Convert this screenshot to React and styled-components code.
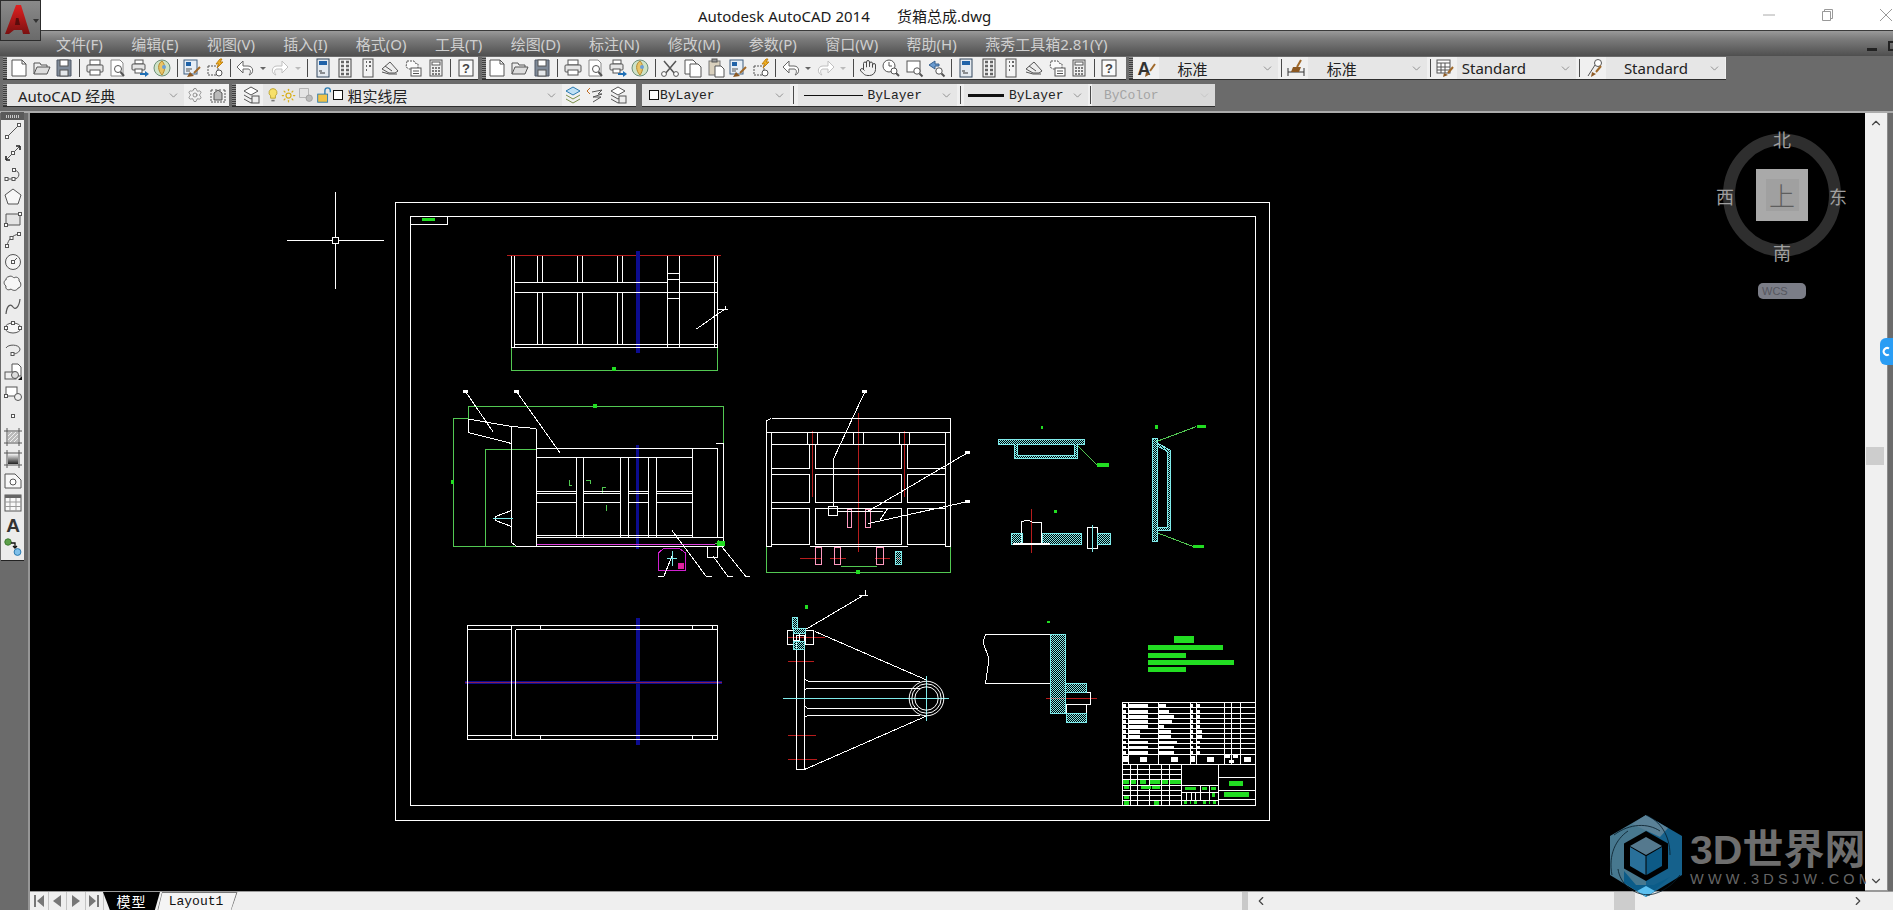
import styled, { createGlobalStyle } from 'styled-components';
import { ChevronDown, ChevronUp, ChevronLeft, ChevronRight, Settings, Hand, Sun } from 'lucide-react';

const GlobalStyle = createGlobalStyle`
	html, body { margin: 0; padding: 0; background: #6b6b6b; overflow: hidden; }
	* { box-sizing: border-box; }
`;

const CJK = '"Noto Sans", "Noto Sans CJK SC", sans-serif';
const MONO = '"Liberation Mono", "Noto Sans CJK SC", monospace';

const Page = styled.div`
	position: relative;
	width: 1893px;
	height: 910px;
	overflow: hidden;
	background: #6b6b6b;
	font-family: ${CJK};
	display: flex;
	flex-direction: column;
`;
const HiddenDefs = styled.svg`
	position: absolute;
	width: 0;
	height: 0;
`;

/* ---------- title + menu ---------- */
const TitleBar = styled.div`
	height: 30px;
	background: #fff;
	display: flex;
	align-items: center;
	padding-left: 698px;
	font-size: 15px;
	color: #1a1a1a;
	white-space: pre;
	flex: none;
`;
const WinButtons = styled.div`
	margin-left: auto;
	margin-right: -22px;
	display: flex;
	align-items: center;
`;
const WinButton = styled.div`
	width: 58px;
	height: 30px;
	display: flex;
	align-items: center;
	justify-content: center;
`;
const AppButton = styled.div`
	position: absolute;
	left: 0;
	top: 0;
	width: 41px;
	height: 41px;
	background: linear-gradient(#8a8a8a, #6a6a6a);
	border: 1px solid #2c2c2c;
	z-index: 3;
`;
const MenuBar = styled.div`
	height: 26px;
	flex: none;
	background: linear-gradient(#9a9a9a, #7d7d7d 30%, #4f4f4f);
	border-top: 1px solid #3a3a3a;
	display: flex;
	align-items: center;
	padding-left: 56px;
	gap: 28.4px;
	position: relative;
`;
const MenuItem = styled.span`
	font-size: 15px;
	color: #cfcfcf;
`;
const DocControls = styled.div`
	position: absolute;
	left: 1867px;
	top: 10px;
	display: flex;
	gap: 11px;
	align-items: flex-end;
`;
const DocMin = styled.div`
	width: 10px;
	height: 3px;
	background: #222;
`;
const DocMax = styled.div`
	width: 10px;
	height: 10px;
	border: 2px solid #222;
`;

/* ---------- toolbars ---------- */
const ToolRow = styled.div`
	height: ${(p) => p.$h}px;
	flex: none;
	display: flex;
	padding: ${(p) => p.$top}px 0 0 3px;
	gap: ${(p) => p.$gap}px;
`;
const Toolbar = styled.div`
	width: ${(p) => p.$w}px;
	margin-left: ${(p) => p.$ml || 0}px;
	height: 22px;
	display: flex;
	align-items: center;
	background: #f0f0f0;
	box-shadow: 0 1px 0 #2e2e2e;
`;
const Grip = styled.div`
	width: 4px;
	height: 100%;
	flex: none;
	margin-right: ${(p) => p.$after || 0}px;
	background: repeating-linear-gradient(#8a8a8a 0 1px, #3e3e3e 1px 2px);
`;
const ToolButton = styled.div`
	width: 22.6px;
	height: 22px;
	flex: none;
	display: flex;
	align-items: center;
	justify-content: center;
`;
const DropArrow = styled.div`
	width: 12.4px;
	flex: none;
	display: flex;
	justify-content: center;
	&::after {
		content: '';
		border-left: 3px solid transparent;
		border-right: 3px solid transparent;
		border-top: 3px solid ${(p) => (p.$off ? '#bbb' : '#666')};
	}
`;
const Sep = styled.div`
	width: 1px;
	height: 18px;
	flex: none;
	margin: 0 ${(p) => p.$m ?? 3.25}px;
	background: #4a4a4a;
`;
const Combo = styled.div`
	width: ${(p) => p.$w}px;
	height: 22px;
	flex: none;
	background: ${(p) => (p.$off ? '#d9d9d9' : '#e6e6e6')};
	display: flex;
	align-items: center;
	padding-left: ${(p) => p.$pad || 0}px;
	font-family: ${(p) => (p.$mono ? MONO : CJK)};
	font-size: ${(p) => (p.$mono ? 13 : 15)}px;
	color: ${(p) => (p.$off ? '#a4a4a4' : '#222')};
	white-space: pre;
`;
const ComboChevron = styled(ChevronDown)`
	margin-left: auto;
	margin-right: 4px;
	flex: none;
	color: ${(p) => (p.$off ? '#bbb' : '#666')};
`;
const LayerSquare = styled.span`
	width: 10px;
	height: 10px;
	border: 1px solid #111;
	background: #fff;
	flex: none;
	margin-right: ${(p) => p.$gap}px;
`;
const LineSample = styled.span`
	width: ${(p) => p.$w}px;
	height: ${(p) => p.$t}px;
	background: #111;
	flex: none;
	margin-right: 5px;
`;
const LayerIcon = styled.span`
	width: ${(p) => p.$w}px;
	flex: none;
	display: flex;
	justify-content: center;
`;
const ToolFiller = styled.div`
	height: 5px;
	flex: none;
`;
const ToolEdge = styled.div`
	height: 2px;
	flex: none;
	background: #ababab;
`;

/* ---------- body ---------- */
const Body = styled.div`
	flex: 1;
	min-height: 0;
	display: flex;
`;
const LeftColumn = styled.div`
	width: 30px;
	flex: none;
	padding-left: 1px;
	border-right: 2px solid #969696;
`;
const SideBar = styled.div`
	width: 23px;
	height: 448px;
	margin-top: -1px;
	background: #ececec;
	box-shadow: 0 1px 0 #222;
`;
const SideGrip = styled.div`
	height: 8px;
	background: #5a5a5a;
	display: flex;
	align-items: center;
	justify-content: center;
	&::after {
		content: '';
		width: 13px;
		height: 3px;
		background: repeating-linear-gradient(90deg, #c8c8c8 0 1px, #5a5a5a 1px 2px);
	}
`;
const SideButton = styled.div`
	height: 21.9px;
	display: flex;
	align-items: center;
	justify-content: center;
`;
const Center = styled.div`
	flex: 1;
	min-width: 0;
	display: flex;
	flex-direction: column;
`;
const Viewport = styled.div`
	height: 778px;
	flex: none;
	display: flex;
`;
const Canvas = styled.div`
	flex: 1;
	position: relative;
	background: #000;
	overflow: hidden;
`;
const DrawingSvg = styled.svg`
	display: block;
	width: 100%;
	height: 100%;
`;
const VScroll = styled.div`
	width: 23px;
	flex: none;
	background: #f0f0f0;
	border-right: 1px solid #8c8c8c;
	border-bottom: 1px solid #999;
	display: flex;
	flex-direction: column;
	align-items: center;
	justify-content: space-between;
	padding: 3px 0 2px;
	position: relative;
	color: #444;
`;
const VThumb = styled.div`
	position: absolute;
	left: 1px;
	top: 334px;
	width: 18px;
	height: 18px;
	background: #cdcdcd;
`;
const Strip = styled.div`
	width: 5px;
	flex: none;
	background: #6b6b6b;
`;
const BottomBar = styled.div`
	flex: 1;
	display: flex;
	background: #efefef;
	border-top: 1px solid #9a9a9a;
	align-items: stretch;
	color: #444;
`;
const NavButton = styled.div`
	width: 18.5px;
	flex: none;
	display: flex;
	align-items: center;
	justify-content: center;
	border-right: 1px solid #c4c4c4;
`;
const ModelTab = styled.div`
	width: 57px;
	margin-left: -1px;
	flex: none;
	background: #000;
	color: #fff;
	font-family: "Noto Sans CJK SC", sans-serif;
	font-size: 14px;
	line-height: 18px;
	letter-spacing: 1px;
	display: flex;
	align-items: center;
	justify-content: center;
	clip-path: polygon(0 0, 100% 0, 91% 100%, 12% 100%);
`;
const LayoutTab = styled.div`
	position: relative;
	width: 84px;
	margin-left: -6px;
	flex: none;
	background: #f4f4f4;
	font-family: ${MONO};
	font-size: 13px;
	color: #111;
	display: flex;
	align-items: center;
	justify-content: center;
	clip-path: polygon(9.5% 0, 100% 0, 92% 100%, 4% 100%);
`;
const TabOutline = styled.svg`
	position: absolute;
	left: 0;
	top: 0;
`;
const HScroll = styled.div`
	margin-left: auto;
	width: 651px;
	flex: none;
	display: flex;
	align-items: center;
	position: relative;
`;
const HGrip = styled.div`
	width: 6px;
	height: 100%;
	flex: none;
	background: #c9c9c9;
`;
const HThumb = styled.div`
	position: absolute;
	left: 372px;
	top: 0;
	width: 21px;
	height: 100%;
	background: #cdcdcd;
`;
const HArrow = styled.div`
	margin-left: ${(p) => p.$left}px;
	display: flex;
`;

/* ---------- over the canvas ---------- */
const CubeWrap = styled.div`
	position: absolute;
	left: 1665px;
	top: 9px;
	width: 150px;
	height: 190px;
`;
const CubeRing = styled.svg`
	position: absolute;
	left: 0;
	top: 0;
`;
const CubeLabel = styled.span`
	position: absolute;
	left: ${(p) => p.$x}px;
	top: ${(p) => p.$y}px;
	transform: translate(-50%, -50%);
	font-family: "Noto Sans CJK SC", sans-serif;
	font-size: 18px;
	line-height: 1;
	color: #a0a0a0;
`;
const CubeFace = styled.div`
	position: absolute;
	left: 61px;
	top: 47px;
	width: 52px;
	height: 52px;
	background: #a9a9a9;
	display: flex;
	align-items: center;
	justify-content: center;
`;
const CubeInner = styled.div`
	width: 33px;
	height: 32px;
	background: #a0a0a0;
	font-family: "Noto Sans CJK SC", sans-serif;
	font-weight: 300;
	font-size: 26px;
	line-height: 32px;
	text-align: center;
	color: #5e5e5e;
`;
const WcsPill = styled.div`
	position: absolute;
	left: 63px;
	top: 161px;
	width: 48px;
	height: 16px;
	border-radius: 5px;
	background: #7b7d87;
	color: #55565e;
	font-family: "Liberation Sans", sans-serif;
	font-size: 11px;
	line-height: 16px;
	padding-left: 4px;
`;
const SideWidget = styled.div`
	position: absolute;
	right: 0;
	top: 338px;
	width: 13px;
	height: 27px;
	border-radius: 6px 0 0 6px;
	background: #2a9df4;
	z-index: 3;
	display: flex;
	align-items: center;
	justify-content: center;
`;
const Watermark = styled.div`
	position: absolute;
	left: 1610px;
	top: 815px;
	width: 256px;
	height: 84px;
	overflow: hidden;
	z-index: 2;
	display: flex;
`;
const MarkLogo = styled.svg`
	flex: none;
`;
const MarkText = styled.div`
	margin: 13px 0 0 8px;
	white-space: nowrap;
`;
const MarkTitle = styled.div`
	font-family: "Liberation Sans", "Noto Sans CJK SC", sans-serif;
	font-weight: 700;
	font-size: 41px;
	line-height: 44px;
	color: #6e6e6e;
`;
const MarkUrl = styled.div`
	font-family: "Liberation Sans", sans-serif;
	font-size: 14.5px;
	line-height: 15px;
	letter-spacing: 4.2px;
	color: #666;
`;

/* ---------- icons ---------- */
const ICONS = {
	new: <><path d="M3 2h10l4 4v12H3z" fill="#fff" /><path d="M13 2v4h4" /></>,
	open: <><path d="M2 16V5h6l1 2h6v2" fill="#eee" /><path d="M2 16l3-7h13l-3 7z" fill="#ddd" /></>,
	save: <><path d="M3 2h14v16H3z" fill="#7f8a98" stroke="#4e5764" /><rect x="6" y="2" width="8" height="6" fill="#fff" /><rect x="6" y="12" width="8" height="6" fill="#e4e7ea" /></>,
	plot: <><rect x="5" y="2" width="10" height="5" fill="#fff" /><rect x="2" y="7" width="16" height="7" rx="1" fill="#e6e6e6" /><rect x="5" y="12" width="10" height="5" fill="#fff" /></>,
	preview: <><path d="M4 2h9l3 3v13H4z" fill="#fff" stroke="#888" /><circle cx="11" cy="11" r="3.5" /><path d="M13.5 14l3.5 4" strokeWidth="2" /></>,
	publish: <><rect x="5" y="2" width="8" height="4" fill="#fff" /><rect x="2" y="6" width="13" height="6" rx="1" fill="#e6e6e6" /><rect x="5" y="11" width="7" height="4" fill="#fff" /><path d="M10 16h6" stroke="#1f6fb5" strokeWidth="2" /><path d="M15 13l4 3-4 3z" fill="#1f6fb5" stroke="none" /></>,
	globe: <><circle cx="10" cy="10" r="8" fill="#cfe3c6" stroke="#6f8f7a" /><path d="M10 3c-5 3-4 10 0 14 3-4 4-10 0-14z" fill="#e9c466" stroke="#b58a30" /><circle cx="12" cy="9" r="2" fill="#6aa0d8" stroke="none" /></>,
	match: <><rect x="2" y="2" width="13" height="14" fill="#e6eef6" stroke="#3f5f80" /><rect x="4" y="4" width="5" height="4" fill="#1f62a8" stroke="none" /><path d="M4 11h6M4 13h4" /><path d="M18 9l-6 6" stroke="#a0692a" strokeWidth="2" /><path d="M8 14l4 4-7 1z" fill="#8d5a24" stroke="none" /></>,
	block: <><path d="M3 8h10v9H3z" strokeDasharray="2 1" /><circle cx="14" cy="15" r="3" fill="#fff" /><path d="M15 1l-4 5h3l-2 4 6-6h-3l2-3z" fill="#f0b020" stroke="#c08010" /></>,
	undo: <path d="M8 3L2 9l6 6v-4h5c3 0 3 4 1 6 5-1 5-9-1-9H8z" fill="#fff" stroke="#666" />,
	redo: <path d="M12 3l6 6-6 6v-4H7c-3 0-3 4-1 6-5-1-5-9 1-9h5z" fill="#fff" stroke="#c0c0c0" />,
	props: <><rect x="4" y="1" width="12" height="18" fill="#e4eaf0" stroke="#33475c" /><rect x="6" y="3" width="8" height="4" fill="#1f62a8" stroke="none" /><path d="M6 13h3M7 15h5" stroke="#333" /></>,
	center: <><rect x="4" y="1" width="12" height="18" fill="#f4f4f4" stroke="#444" /><path d="M6 4h3M11 4h3M6 8h3M11 8h3M6 12h3M11 12h3M6 16h3M11 16h3" strokeWidth="2.5" stroke="#666" /></>,
	palette: <><rect x="5" y="1" width="10" height="18" fill="#f4f4f4" stroke="#555" /><path d="M8 4h1M8 8h1M8 12h1M11 4h2M11 8h2" strokeWidth="2" stroke="#666" /></>,
	sheet: <><path d="M2 11l8-7 8 9-3 2H9z" fill="#eee" /><path d="M2 14l7 2h8M5 8l7 5" /></>,
	markup: <><path d="M4 3h7l1 2 3 1v4l-2 1H6L3 9z" fill="#fafafa" strokeDasharray="2 1" /><rect x="8" y="10" width="10" height="8" fill="#fff" /><path d="M10 13h6M10 15.5h6" /></>,
	calc: <><rect x="4" y="2" width="12" height="16" fill="#f0f0f0" stroke="#555" /><rect x="6" y="4" width="8" height="3" fill="#fff" /><path d="M6 10h8M6 13h8M6 16h8" strokeDasharray="2 1" strokeWidth="1.5" /></>,
	help: <><rect x="3" y="2" width="14" height="16" fill="#fafafa" stroke="#444" /><text x="10" y="15" textAnchor="middle" fontFamily="Liberation Sans" fontWeight="700" fontSize="13" fill="#444" stroke="none">?</text></>,
	cut: <><path d="M4 3l11 13M16 3L5 16" strokeWidth="1.5" /><circle cx="4" cy="16" r="2.4" fill="#fff" /><circle cx="16" cy="16" r="2.4" fill="#fff" /></>,
	copy: <><path d="M2 2h8l3 3v11H2z" fill="#fff" /><path d="M7 6h8l3 3v10H7z" fill="#fff" /></>,
	paste: <><rect x="3" y="3" width="11" height="14" fill="#d9d0bd" stroke="#777" /><rect x="6" y="1" width="5" height="3" fill="#999" /><path d="M9 8h6l3 3v8H9z" fill="#fff" /></>,
	zoomRt: <><circle cx="8" cy="8" r="6" fill="#fff" /><path d="M8 4v4h3" /><circle cx="13" cy="13" r="3" fill="#fff" /><path d="M15 15l3 3" strokeWidth="2" /></>,
	zoomWin: <><rect x="3" y="3" width="13" height="11" fill="#fff" /><circle cx="13" cy="13" r="3.2" fill="#fff" /><path d="M15.5 15.5l3 3" strokeWidth="2" /></>,
	zoomPrev: <><path d="M9 3L3 7l6 4V8h4V6H9z" fill="#6a9bd0" stroke="#37618f" /><circle cx="13" cy="13" r="3.2" fill="#fff" /><path d="M15.5 15.5l3 3" strokeWidth="2" /></>,
	textStyle: <><text x="7" y="17" textAnchor="middle" fontFamily="Liberation Sans" fontWeight="700" fontSize="18" fill="#333" stroke="none">A</text><path d="M18 6l-5 7" stroke="#a0692a" strokeWidth="2" /><path d="M9 14l4 2-5 3z" fill="#8d5a24" stroke="none" /></>,
	dimStyle: <><path d="M2 10v8M18 10v8M2 14h16" stroke="#333" /><path d="M15 2l-4 7" stroke="#a0692a" strokeWidth="2" /><path d="M7 9h8l-2 5H5z" fill="#8d5a24" stroke="none" /></>,
	tableStyle: <><rect x="2" y="2" width="13" height="13" fill="#fff" stroke="#555" /><path d="M2 5h13M2 9h13M2 12h13M6 5v10M10 5v10" /><path d="M18 9l-5 6" stroke="#a0692a" strokeWidth="2" /><path d="M9 15l4 2-5 2z" fill="#8d5a24" stroke="none" /></>,
	leaderStyle: <><circle cx="13" cy="5" r="3.5" fill="#fff" /><path d="M10 7L3 18" /><path d="M16 8l-5 6" stroke="#a0692a" strokeWidth="2" /><path d="M7 14l4 2-5 3z" fill="#8d5a24" stroke="none" /></>,
	workspace: <><path d="M3 5h2M7 5h2M11 5h2M15 5h2M3 17h14M3 5v12M17 5v12" strokeDasharray="2 1" /><path d="M6 15V8l4-3 4 3v7z" fill="#bbb" /></>,
	layerState: <><path d="M3 6l7-4 7 4-7 4z" fill="#fff" /><path d="M3 10l7 4 4-2M3 14l7 4 4-2" /><rect x="11" y="11" width="7" height="7" fill="#eee" /></>,
	layers1: <><path d="M3 6l7-4 7 4-7 4z" fill="#bfe0f5" stroke="#2a7ab0" /><path d="M3 10l7 4 7-4M3 14l7 4 7-4" stroke="#7a8f4a" /></>,
	layers2: <><path d="M5 3l-3 3 3 3" stroke="#c06a20" /><path d="M7 7l10-2-4 4 4 0-9 3 8 0-8 5" stroke="#555" /></>,
	bulb: <><path d="M10 2a5 5 0 0 1 3 9v3H7v-3a5 5 0 0 1 3-9z" fill="#f7e06a" stroke="#b59a20" /><path d="M8 16h4v2H8z" fill="#777" stroke="none" /></>,
	freeze: <><rect x="2" y="2" width="11" height="11" fill="#e4e4e4" stroke="#aaa" /><circle cx="14" cy="14" r="4" fill="#bbb" stroke="#999" /></>,
	lock: <><path d="M11 9V5a3 3 0 0 1 6 0v2" stroke="#2a7ab0" strokeWidth="1.5" /><rect x="3" y="9" width="11" height="9" fill="#f1c244" stroke="#2a7ab0" /></>,
	// left toolbar
	line: <><path d="M4 16L16 4" /><rect x="2.5" y="14.5" width="3" height="3" fill="#fff" /><rect x="14.5" y="2.5" width="3" height="3" fill="#fff" /></>,
	xline: <><path d="M3 17L17 3" /><path d="M17 3h-4M17 3v4M3 17h4M3 17v-4" strokeWidth="1.6" stroke="#222" /><rect x="8.5" y="8.5" width="3" height="3" fill="#fff" /></>,
	pline: <><path d="M3 14h8M11 14c6 0 7-8 0-9" /><rect x="2" y="12.5" width="3" height="3" fill="#fff" /><rect x="9" y="12.5" width="3" height="3" fill="#fff" /><rect x="9.5" y="3.5" width="3" height="3" fill="#fff" /></>,
	polygon: <path d="M10 2l8 6-3 9H5L2 8z" fill="#f7f7f7" />,
	rect: <><path d="M3 5h14v11H3z" fill="#e4e4e4" /><rect x="15.5" y="3.5" width="3" height="3" fill="#fff" /><rect x="1.5" y="14.5" width="3" height="3" fill="#fff" /></>,
	arc: <><path d="M4 16C5 9 10 5 16 4" /><rect x="2.5" y="14.5" width="3" height="3" fill="#fff" /><rect x="14.5" y="2.5" width="3" height="3" fill="#fff" /><rect x="7" y="6.5" width="3" height="3" fill="#fff" /></>,
	circle: <><circle cx="10" cy="10" r="7.5" fill="#f4f4f4" /><path d="M10 10l4-4" /><rect x="8.5" y="8.5" width="3" height="3" fill="#fff" /></>,
	cloud: <path d="M5 3c3-2 5 0 6 1 2-2 6 0 5 3 3 2 2 7-1 7-1 3-5 3-7 1-3 2-6 0-5-3-3-2-2-6 0-6 0-2 1-3 2-3z" fill="#f7f7f7" />,
	spline: <path d="M3 18C4 8 8 8 10 11s6 1 7-8" strokeWidth="1.2" />,
	ellipse: <><ellipse cx="10" cy="10" rx="8" ry="5" fill="#f7f7f7" /><rect x="1.5" y="8.5" width="3" height="3" fill="#fff" /><rect x="15.5" y="8.5" width="3" height="3" fill="#fff" /><rect x="8.5" y="3.5" width="3" height="3" fill="#fff" /></>,
	earc: <><path d="M3 8c2-4 13-4 14 1 0 3-4 5-7 5" /><rect x="8" y="12.5" width="3" height="3" fill="#fff" /></>,
	insert: <><path d="M9 2h6l3 3v9H9z" fill="#fff" /><rect x="2" y="10" width="11" height="7" fill="#eee" /><circle cx="12" cy="13" r="3.5" fill="#ddd" /><path d="M15 18l4-4v4z" fill="#111" stroke="none" /></>,
	wblock: <><rect x="3" y="3" width="11" height="9" fill="#fff" /><circle cx="15" cy="13" r="3.5" fill="#eee" /><rect x="1.5" y="10.5" width="3" height="3" fill="#fff" /></>,
	point: <rect x="8.5" y="8.5" width="3" height="3" fill="#fff" />,
	hatch: <><path d="M1 4h18M1 16h18M4 1v18M16 1v18" /><rect x="5" y="5" width="10" height="10" fill="#bbb" stroke="none" /><path d="M5 9l4-4M5 13l8-8M7 15l8-8M11 15l4-4" stroke="#eee" /></>,
	gradient: <><path d="M1 4h18M1 16h18M4 1v18M16 1v18" /><rect x="5" y="5" width="10" height="10" fill="url(#grad)" stroke="none" /></>,
	region: <><path d="M2 3h10l6 6v8H2z" fill="#f7f7f7" /><circle cx="10" cy="11" r="3" fill="#fff" /></>,
	table: <><rect x="2" y="2" width="16" height="16" fill="#f8f8f8" stroke="#555" /><rect x="2" y="2" width="16" height="3" fill="#666" stroke="none" /><path d="M2 9h16M2 13.5h16M7 5v13M13 5v13" stroke="#999" /></>,
	mtext: <text x="10" y="17" textAnchor="middle" fontFamily="Liberation Sans" fontWeight="700" fontSize="19" fill="#333" stroke="none">A</text>,
	addSel: <><circle cx="5" cy="5" r="3.2" fill="#5da04a" stroke="#3e7a30" /><path d="M8 6h4v5M10 9l2 2 2-2" stroke="#111" strokeWidth="1.3" /><circle cx="14.5" cy="15" r="3.4" fill="#7fc0ea" stroke="#2a7ab0" /></>
};

function Ico({ name, size = 20 }) {
	return (
		<svg width={size} height={size} viewBox="0 0 20 20" fill="none" stroke="#555" strokeWidth="1">
			{ICONS[name]}
		</svg>
	);
}

const PALETTE_GROUP = [ 'props', 'center', 'palette', 'sheet', 'markup', 'calc', '|', 'help' ];
const FIRST_BAR = [ 'new', 'open', 'save', '|', 'plot', 'preview', 'publish', 'globe', '|', 'match', 'block', '|', 'undo', 'v', 'redo', 'v-off', '|', ...PALETTE_GROUP ];
const SECOND_BAR = [
	'new', 'open', 'save', '|', 'plot', 'preview', 'publish', 'globe', '|', 'cut', 'copy', 'paste', 'match', 'block', '|',
	'undo', 'v', 'redo', 'v-off', '|', 'pan', 'zoomRt', 'zoomWin', 'zoomPrev', '|', ...PALETTE_GROUP
];
const SIDE_ICONS = [
	'line', 'xline', 'pline', 'polygon', 'rect', 'arc', 'circle', 'cloud', 'spline', 'ellipse',
	'earc', 'insert', 'wblock', 'point', 'hatch', 'gradient', 'region', 'table', 'mtext', 'addSel'
];
const MENUS = [ '文件(F)', '编辑(E)', '视图(V)', '插入(I)', '格式(O)', '工具(T)', '绘图(D)', '标注(N)', '修改(M)', '参数(P)', '窗口(W)', '帮助(H)', '燕秀工具箱2.81(Y)' ];

function BarItems({ items }) {
	return items.map((item, i) => {
		if (item === '|') return <Sep key={i} />;
		if (item === 'v') return <DropArrow key={i} />;
		if (item === 'v-off') return <DropArrow key={i} $off />;
		if (item === 'pan') return <ToolButton key={i}><Hand size={18} strokeWidth={1.3} color="#444" /></ToolButton>;
		return <ToolButton key={i}><Ico name={item} /></ToolButton>;
	});
}

/* ---------- the drawing ---------- */
const WHITE = '#fff';
const GREEN = '#52c852';
const RED = '#b81c1c';
const BLUE = '#0c0c90';
const CYAN = '#7feaea';
const DOT = '#22dd22';

const hLines = (ys, x1, x2) => ys.map((y) => `M${x1} ${y}H${x2}`).join('');
const vLines = (xs, y1, y2) => xs.map((x) => `M${x} ${y1}V${y2}`).join('');
const boxes = (list) => list.map(([ a, b, c, d ]) => `M${a} ${b}H${c}V${d}H${a}Z`).join('');

const whitePath = [
	// sheet
	boxes([ [ 395.5, 202.5, 1269.5, 820.5 ], [ 410.5, 216.5, 1255.5, 805.5 ], [ 410.5, 216.5, 447.5, 224.5 ] ]),
	// top view
	hLines([ 344.5 ], 514.5, 717.5),
	hLines([ 347.5 ], 511.5, 717.5),
	hLines([ 282.5, 292.5 ], 514.5, 667.5),
	hLines([ 282.5, 292.5 ], 679.5, 717.5),
	hLines([ 273.5, 279.5, 292.5, 298.5 ], 667.5, 679.5),
	vLines([ 511.5 ], 256, 347.5),
	vLines([ 514.5, 714.5, 717.5, 667.5, 679.5 ], 256, 347),
	vLines([ 537.5, 542.5, 577.5, 582.5, 617.5, 622.5 ], 256, 282.5),
	vLines([ 537.5, 542.5, 577.5, 582.5, 617.5, 622.5 ], 292.5, 344.5),
	'M696.5 329L725 309M717 309H728M725.5 306V309',
	// side view
	'M468 419L511.5 426.5L536.5 428.5M468 419V432.5L511.5 443.5M511.5 426.5V542.5L517 546.5H536.5M536.5 428.5V546.5',
	hLines([ 546.5 ], 536.5, 723),
	hLines([ 448.5 ], 536.5, 717.5),
	hLines([ 457.5, 535.5 ], 536.5, 692.5),
	hLines([ 537.5 ], 536.5, 723),
	vLines([ 692.5 ], 448.5, 537.5),
	vLines([ 717.5 ], 448.5, 537.5),
	vLines([ 723.5 ], 443.5, 546.5),
	hLines([ 443.5 ], 716, 723.5),
	vLines([ 576.5, 583.5, 620.5, 628.5, 648.5, 656.5 ], 457.5, 537.5),
	hLines([ 491.5, 493.5, 502.5 ], 536.5, 576.5),
	hLines([ 491.5, 493.5, 502.5 ], 583.5, 620.5),
	hLines([ 491.5, 493.5, 502.5 ], 628.5, 648.5),
	hLines([ 491.5, 493.5, 502.5 ], 656.5, 692.5),
	'M511.5 510.5L495.5 516.5V520.5L511.5 526.5',
	'M465.5 391.5L493.5 432.5M516.5 391.5L560.5 453.5',
	'M672 530.5L706 576H712M713 556L727.5 576H733M720.5 545L745.5 576H750',
	boxes([ [ 707.5, 546.5, 717.5, 557.5 ] ]),
	'M672 556L664 576H658',
	// front view
	'M771.5 418.5H950.5V546.5M771.5 418.5L766.5 420.5V546.5H771.5',
	hLines([ 432.5 ], 766.5, 950.5),
	hLines([ 444.5 ], 771.5, 945.5),
	vLines([ 771.5, 945.5 ], 432.5, 546.5),
	vLines([ 807.5, 817.5, 853.5, 863.5, 899.5, 909.5 ], 432.5, 444.5),
	boxes([
		[ 771.5, 444.5, 809.5, 468.5 ], [ 771.5, 474.5, 809.5, 502.5 ], [ 771.5, 508.5, 809.5, 544.5 ],
		[ 815.5, 444.5, 901.5, 468.5 ], [ 815.5, 474.5, 901.5, 502.5 ], [ 815.5, 508.5, 901.5, 544.5 ],
		[ 907.5, 444.5, 945.5, 468.5 ], [ 907.5, 474.5, 945.5, 502.5 ], [ 907.5, 508.5, 945.5, 544.5 ]
	]),
	hLines([ 546.5 ], 809.5, 907.5),
	'M945.5 546.5H950.5',
	'M865 391.5L833 460V506.5',
	boxes([ [ 828.5, 506.5, 837.5, 515.5 ] ]),
	'M837.5 511.5H882.5M968 452.5L868.5 511M968 501.5L868.5 523.5M888 508L880 520',
	// sections
	'M1021.5 544V521.5L1028 520L1033 522.5L1041.5 523V544',
	boxes([ [ 1087.5, 527.5, 1097.5, 548.5 ] ]),
	// bracket
	boxes([ [ 796.5, 635.5, 804.5, 769.5 ] ]),
	'M815 631.5L926.5 680M804.5 769.5L926.5 716',
	'M804.5 679L808 681H920M808 681V681M804.5 690L808 688H920M804.5 706L808 708.5H918M804.5 717L808 715.5H920',
	'M806.5 629L864 595M859 595H868M865 590V595',
	boxes([ [ 787.5, 630.5, 793.5, 644.5 ], [ 793.5, 633.5, 799.5, 640.5 ], [ 805.5, 630.5, 813.5, 644.5 ] ]),
	// right section
	'M1050 634H985.5L983 642L989 659L985.5 683.5H1050',
	boxes([ [ 1065.5, 692.5, 1090.5, 704.5 ], [ 1066.5, 704.5, 1086.5, 713.5 ] ]),
	// plan
	boxes([ [ 467.5, 625.5, 717.5, 739.5 ] ]),
	hLines([ 629.5, 735.5 ], 467.5, 511.5),
	hLines([ 629.5, 735.5 ], 515.5, 717.5),
	vLines([ 511.5 ], 625.5, 739.5),
	vLines([ 515.5 ], 629.5, 735.5),
	vLines([ 540.5, 692.5, 712.5 ], 625.5, 629.5),
	vLines([ 540.5, 692.5, 712.5 ], 735.5, 739.5)
].join('');

// small filled ends of the leader lines
const leaderEnds = [ [ 463, 390, 5, 3 ], [ 514, 390, 5, 3 ], [ 862, 390, 5, 3 ], [ 965, 451, 5, 3 ], [ 965, 500, 5, 3 ] ];

const greenPath = [
	'M511.5 347.5V370.5H717.5V347.5',
	'M468 419.5V406.5H723.5V443.5M453 418.5H468M453 418.5V546.5H516.5M485.5 449V546M485.5 449H536.5',
	'M766.5 546.5V572.5H950.5V546.5M840.5 566.5H876.5',
	'M1077 445L1097 465M1156.5 441.5L1196.5 426.5M1156.5 532.5L1193 546.5',
	'M569 480V485H572M586 480H590V484M606 487H602V493M606 505V511',
	'M715 543H725M718 540V548'
].join('');

const greenDots = [
	[ 422, 218, 13, 3 ], [ 612, 367, 4, 4 ], [ 593, 404, 4, 4 ], [ 451, 480, 3, 4 ], [ 856, 570, 4, 4 ],
	[ 1041, 426, 2, 3 ], [ 1097, 463, 12, 4 ], [ 1155, 425, 3, 4 ], [ 1197, 425, 9, 3 ], [ 1193, 545, 11, 3 ],
	[ 1054, 510, 3, 3 ], [ 805, 605, 3, 4 ], [ 1047, 621, 3, 2 ], [ 717, 541, 8, 5 ],
	// notes
	[ 1174, 636, 20, 7 ], [ 1148, 645, 75, 5 ], [ 1148, 653, 38, 5 ], [ 1148, 660, 86, 5 ], [ 1148, 667, 38, 5 ]
];

// title block, in 3x crop units (x from 1100, y from 620)
const tx = (v) => 1100 + v / 3;
const ty = (v) => 620 + v / 3;
const TB_ROWS = [ 247, 263, 279, 294, 309, 325, 340, 356, 371, 386, 402 ];
const TB_W2 = [ 144, 144, 144, 144, 144, 120, 120, 144, 144, 144 ];
const TB_W3 = [ 198, 208, 222, 216, 192, 213, 213, 231, 222, 222 ];
const TB_W5 = [ 300, 300, 300, 300, 300, 306, 306, 300, 300, 300 ];

const tbWhite = [
	...TB_W2.flatMap((w, i) => {
		const a = TB_ROWS[i] + 6;
		const b = TB_ROWS[i + 1] - 1;
		return [ [ 70, 78, a, b ], [ 86, w, a, b ], [ 175, TB_W3[i], a, b ], [ 271, 279, a, b ], [ 290, TB_W5[i], a, b ] ];
	}),
	[ 70, 85, 408, 426 ], [ 120, 141, 411, 426 ], [ 213, 234, 411, 426 ], [ 272, 285, 408, 426 ], [ 321, 342, 411, 426 ],
	[ 375, 390, 405, 414 ], [ 398, 414, 405, 414 ], [ 386, 402, 420, 429 ], [ 432, 453, 411, 426 ]
];
const tbGreen = [
	[ 68, 88, 480, 493 ], [ 92, 108, 480, 493 ], [ 120, 139, 480, 493 ], [ 149, 180, 480, 493 ], [ 186, 204, 480, 493 ], [ 210, 243, 480, 493 ],
	[ 72, 87, 497, 507 ], [ 122, 152, 497, 507 ], [ 157, 180, 497, 507 ], [ 72, 87, 527, 537 ], [ 72, 87, 542, 555 ], [ 162, 177, 542, 555 ],
	[ 255, 288, 501, 511 ], [ 305, 322, 501, 511 ], [ 332, 349, 501, 511 ], [ 335, 345, 518, 532 ],
	[ 251, 261, 543, 552 ], [ 281, 291, 543, 552 ], [ 309, 318, 543, 552 ], [ 339, 348, 543, 552 ], [ 269, 272, 543, 552 ], [ 327, 330, 543, 552 ],
	[ 387, 429, 483, 498 ], [ 372, 447, 516, 531 ]
];
const tbLines = [
	hLines([ 247, 263, 279, 294, 309, 325, 340, 356, 371, 386, 402, 433 ].map(ty), 1122.5, 1255.5),
	vLines([ 67, 86, 175, 271, 290, 373, 394, 422, 466 ].map(tx), ty(247), ty(433)),
	hLines([ 448, 464, 479, 495, 510, 525, 540 ].map(ty), tx(67), tx(245)),
	vLines([ 67, 92, 112, 148, 185, 208, 245 ].map(tx), ty(433), ty(555)),
	hLines([ 495, 517, 540 ].map(ty), tx(245), tx(355)),
	vLines([ 355 ].map(tx), ty(433), ty(555)),
	vLines([ 300, 327 ].map(tx), ty(495), ty(540)),
	vLines([ 259, 273, 287 ].map(tx), ty(517), ty(540)),
	hLines([ 472, 511, 538 ].map(ty), tx(355), tx(466))
].join('');

const toRect = ([ a, b, c, d ], key, fill) => (
	<rect key={key} x={tx(a)} y={ty(c)} width={(b - a) / 3} height={(d - c) / 3} fill={fill} />
);

function Drawing() {
	return (
		<DrawingSvg viewBox="30 113 1835 778" shapeRendering="crispEdges">
			<defs>
				<pattern id="hatchFill" width="2" height="2" patternUnits="userSpaceOnUse">
					<rect width="1" height="1" fill={CYAN} />
					<rect x="1" y="1" width="1" height="1" fill={CYAN} />
				</pattern>
			</defs>

			<path d="M335.5 192V289M287 240.5H384" stroke={WHITE} fill="none" />
			<rect x="332.5" y="237.5" width="6" height="6" stroke={WHITE} fill="#000" />

			{/* centre lines behind the outlines */}
			<path d="M507 255.5H721" stroke={RED} />
			<path d="M638 251V353M637.5 445V549M638 618V745M465 682.5H722" stroke={BLUE} strokeWidth="3.5" />
			<path d="M465 682.5H722" stroke="#8a2050" />
			<path d="M812.5 431V497M858.5 413V552M904.5 431V497M1031.5 509V553M788 661H814M788 735H816M788 759H817M787 637.5H825M1046 698.5H1097M800 558H822M830 558H846M875 558H890M895 558H902" stroke={RED} />

			<path d="M536.5 544.5H715" stroke="#e040e0" />
			<path d="M658.5 570.5V553L664 548H679L685.5 553V570.5Z" stroke="#d020d0" fill="none" />
			<rect x="678" y="563" width="6" height="6" fill="#e020a0" />
			<path d="M815.5 547H821.5V564H815.5ZM834.5 547H840.5V564H834.5ZM876.5 547H883.5V564H876.5ZM847 509.5H851.5V527.5H847ZM865.5 509.5H870V527.5H865.5Z" stroke="#ff9ac0" fill="none" />

			<path d={greenPath} stroke={GREEN} fill="none" />
			<path d={whitePath} stroke={WHITE} fill="none" />
			{leaderEnds.map(([ x, y, w, h ], i) => <rect key={i} x={x} y={y} width={w} height={h} fill={WHITE} />)}

			{/* hatched sections */}
			<path
				d="M998 439H1084V444H1077V458.5H1014V444H998ZM1017 444V455.5H1074V444Z
				M1011 533H1022V544H1011ZM1042 533H1081V544H1042ZM1097.5 533H1110V544H1097.5Z
				M1152 438H1157V541H1152ZM1157 530H1170V450L1157 443V446L1167.5 451.5V527.5H1157Z
				M792 617H797V628H792ZM793 628H805V633H793ZM793 641H804V649H793Z
				M1050 634H1065.5V713.5H1050ZM1065.5 683.5H1086.5V692.5H1065.5ZM1066.5 713.5H1086.5V722.5H1066.5Z
				M895.5 551H901.5V564H895.5Z"
				fill="url(#hatchFill)"
				fillRule="evenodd"
				stroke={CYAN}
			/>
			<path d="M1013 544H1050" stroke={WHITE} strokeWidth="2" />
			<path d="M1092.5 525V552M493 518.5H513M672 551V566M667 558H677" stroke={CYAN} />
			<path d="M782.5 698.5H948.5M926.5 676V721" stroke={CYAN} />

			<g shapeRendering="geometricPrecision" fill="none" stroke={WHITE} strokeWidth="1">
				<circle cx="926.5" cy="698.5" r="17.3" />
				<circle cx="926.5" cy="698.5" r="14.7" />
				<circle cx="926.5" cy="698.5" r="11.7" />
			</g>

			{greenDots.map(([ x, y, w, h ], i) => <rect key={i} x={x} y={y} width={w} height={h} fill={DOT} />)}

			{/* title block */}
			<path d={tbLines} stroke={WHITE} fill="none" />
			{tbWhite.map((r, i) => toRect(r, 'w' + i, WHITE))}
			{tbGreen.map((r, i) => toRect(r, 'g' + i, DOT))}
		</DrawingSvg>
	);
}

function HexMark() {
	return (
		<MarkLogo width="72" height="82" viewBox="0 0 72 82">
			<path d="M36 0L0 21V60L36 82Z" fill="#47788f" />
			<path d="M36 0L72 21V60L36 82Z" fill="#15618c" />
			<path d="M36 0L58 13L50 22L22 9Z" fill="#5a8197" />
			<path d="M14 56L26 70H44L60 62L36 82L14 68Z" fill="#0b5c89" />
			<path d="M27 76L36 82L45 76L36 71Z" fill="#5cc0f0" />
			<g fill="none" stroke="#061a26" strokeWidth="0.8">
				<path d="M36 0C50 6 60 20 60 40" />
				<path d="M4 20C20 8 38 8 50 16" />
				<path d="M2 60C-2 40 6 24 18 16" />
				<path d="M40 80C22 80 10 68 8 54" />
				<path d="M70 60C60 74 46 80 36 80" />
			</g>
			<path d="M36 16L58 28.5V53.5L36 66L14 53.5V28.5Z" fill="#000" />
			<path d="M36 22L52 31L36 40L20 31Z" fill="#55798e" />
			<path d="M20 32L35.5 41V60L20 51Z" fill="#29709a" />
			<path d="M36.5 41L52 32V51L36.5 60Z" fill="#0d5a86" />
		</MarkLogo>
	);
}

function ALogo() {
	return (
		<svg width="39" height="39" viewBox="0 0 39 39">
			<defs>
				<linearGradient id="aRed" x1="0" y1="0" x2="0" y2="1">
					<stop offset="0" stopColor="#e02020" />
					<stop offset="1" stopColor="#7a1010" />
				</linearGradient>
			</defs>
			<path d="M15 4H20L29 33H22L21 29H13L8 33H4Z" fill="url(#aRed)" />
			<path d="M15 17L14 24H19L17.5 17Z" fill="#5a0c0c" />
			<path d="M32 18H38L35 22Z" fill="#333" />
		</svg>
	);
}

const StyleChevron = () => <ComboChevron size={13} strokeWidth={1.2} />;

export default function App() {
	return (
		<Page>
			<GlobalStyle />
			<HiddenDefs>
				<defs>
					<linearGradient id="grad" x1="0" y1="0" x2="0" y2="1">
						<stop offset="0" stopColor="#f4f4f4" />
						<stop offset="1" stopColor="#222" />
					</linearGradient>
				</defs>
			</HiddenDefs>
			<AppButton><ALogo /></AppButton>

			<TitleBar>
				Autodesk AutoCAD 2014{'       '}货箱总成.dwg
				<WinButtons>
					<WinButton>
						<svg width="14" height="2"><path d="M0 1H12" stroke="#aaa" /></svg>
					</WinButton>
					<WinButton>
						<svg width="14" height="14" fill="none" stroke="#999"><path d="M1.5 3.5H9.5V12.5H1.5ZM3.5 3.5V1.5H11.5V10.5H9.5" /></svg>
					</WinButton>
					<WinButton>
						<svg width="14" height="14" stroke="#999"><path d="M1 1L13 13M13 1L1 13" /></svg>
					</WinButton>
				</WinButtons>
			</TitleBar>

			<MenuBar>
				{MENUS.map((m) => <MenuItem key={m}>{m}</MenuItem>)}
				<DocControls>
					<DocMin />
					<DocMax />
				</DocControls>
			</MenuBar>

			<ToolRow $h={28} $top={1} $gap={4}>
				<Toolbar $w={475}>
					<Grip $after={1} />
					<BarItems items={FIRST_BAR} />
				</Toolbar>
				<Toolbar $w={644}>
					<Grip />
					<BarItems items={SECOND_BAR} />
				</Toolbar>
				<Toolbar $w={597} $ml={-1}>
					<Grip $after={3} />
					<ToolButton><Ico name="textStyle" /></ToolButton>
					<Combo $w={119} $pad={19}>标准<StyleChevron /></Combo>
					<Sep />
					<ToolButton><Ico name="dimStyle" /></ToolButton>
					<Combo $w={119} $pad={19}>标准<StyleChevron /></Combo>
					<Sep />
					<ToolButton><Ico name="tableStyle" /></ToolButton>
					<Combo $w={119} $pad={5}>Standard<StyleChevron /></Combo>
					<Sep />
					<ToolButton><Ico name="leaderStyle" /></ToolButton>
					<Combo $w={119} $pad={18}>Standard<StyleChevron /></Combo>
				</Toolbar>
			</ToolRow>

			<ToolRow $h={22} $top={0} $gap={3}>
				<Toolbar $w={226}>
					<Grip />
					<Combo $w={177} $pad={11}>AutoCAD 经典<StyleChevron /></Combo>
					<ToolButton><Settings size={16} strokeWidth={1} color="#666" /></ToolButton>
					<ToolButton><Ico name="workspace" /></ToolButton>
				</Toolbar>
				<Toolbar $w={404}>
					<Grip $after={4} />
					<ToolButton><Ico name="layerState" /></ToolButton>
					<Combo $w={299} $pad={2}>
						<LayerIcon $w={16}><Ico name="bulb" size={18} /></LayerIcon>
						<LayerIcon $w={16}><Sun size={15} color="#d8b020" /></LayerIcon>
						<LayerIcon $w={18}><Ico name="freeze" size={16} /></LayerIcon>
						<LayerIcon $w={18}><Ico name="lock" size={18} /></LayerIcon>
						<LayerSquare $gap={5} />
						粗实线层
						<StyleChevron />
					</Combo>
					<ToolButton><Ico name="layers1" /></ToolButton>
					<ToolButton><Ico name="layers2" /></ToolButton>
					<ToolButton><Ico name="layerState" /></ToolButton>
				</Toolbar>
				<Toolbar $w={573} $ml={3}>
					<Combo $w={148} $pad={7} $mono>
						<LayerSquare $gap={1} />ByLayer<StyleChevron />
					</Combo>
					<Sep />
					<Combo $w={159} $pad={6} $mono>
						<LineSample $w={59} $t={1} />ByLayer<StyleChevron />
					</Combo>
					<Sep />
					<Combo $w={124} $pad={4} $mono>
						<LineSample $w={36} $t={3} />ByLayer<StyleChevron />
					</Combo>
					<Sep $m={1.5} />
					<Combo $w={123} $pad={12} $mono $off>
						ByColor<ComboChevron size={13} strokeWidth={1.2} $off />
					</Combo>
				</Toolbar>
			</ToolRow>
			<ToolFiller />
			<ToolEdge />

			<Body>
				<LeftColumn>
					<SideBar>
						<SideGrip />
						{SIDE_ICONS.map((name) => <SideButton key={name}><Ico name={name} /></SideButton>)}
					</SideBar>
				</LeftColumn>
				<Center>
					<Viewport>
						<Canvas>
							<Drawing />
							<CubeWrap>
								<CubeRing width="150" height="150">
									<ellipse cx="87" cy="73" rx="53" ry="55.5" fill="none" stroke="#2e2e2e" strokeWidth="12" />
								</CubeRing>
								<CubeLabel $x={87} $y={17}>北</CubeLabel>
								<CubeLabel $x={87} $y={130}>南</CubeLabel>
								<CubeLabel $x={30} $y={74}>西</CubeLabel>
								<CubeLabel $x={143} $y={74}>东</CubeLabel>
								<CubeFace><CubeInner>上</CubeInner></CubeFace>
								<WcsPill>WCS</WcsPill>
							</CubeWrap>
						</Canvas>
						<VScroll>
							<ChevronUp size={14} strokeWidth={2} />
							<VThumb />
							<ChevronDown size={14} strokeWidth={2} />
						</VScroll>
						<Strip />
					</Viewport>
					<BottomBar>
						<NavButton><svg width="10" height="12" fill="#777"><path d="M0 0H2V12H0ZM10 0V12L3 6Z" /></svg></NavButton>
						<NavButton><svg width="8" height="12" fill="#777"><path d="M8 0V12L0 6Z" /></svg></NavButton>
						<NavButton><svg width="8" height="12" fill="#777"><path d="M0 0V12L8 6Z" /></svg></NavButton>
						<NavButton><svg width="10" height="12" fill="#777"><path d="M8 0H10V12H8ZM0 0V12L7 6Z" /></svg></NavButton>
						<ModelTab>模型</ModelTab>
						<LayoutTab>
							Layout1
							<TabOutline width="84" height="19" fill="none" stroke="#777">
								<path d="M8 0L3.5 19M83 0L77 19M8 .5H83M3.5 18.5H77" />
							</TabOutline>
						</LayoutTab>
						<HScroll>
							<HGrip />
							<HArrow $left={6}><ChevronLeft size={14} strokeWidth={2} /></HArrow>
							<HThumb />
							<HArrow $left={583}><ChevronRight size={14} strokeWidth={2} /></HArrow>
						</HScroll>
					</BottomBar>
				</Center>
			</Body>

			<SideWidget>
				<svg width="9" height="11" fill="none" stroke="#fff" strokeWidth="2"><path d="M7 2.5A3.5 3.5 0 1 0 7 8.5" /></svg>
			</SideWidget>
			<Watermark>
				<HexMark />
				<MarkText>
					<MarkTitle>3D世界网</MarkTitle>
					<MarkUrl>WWW.3DSJW.COM</MarkUrl>
				</MarkText>
			</Watermark>
		</Page>
	);
}
